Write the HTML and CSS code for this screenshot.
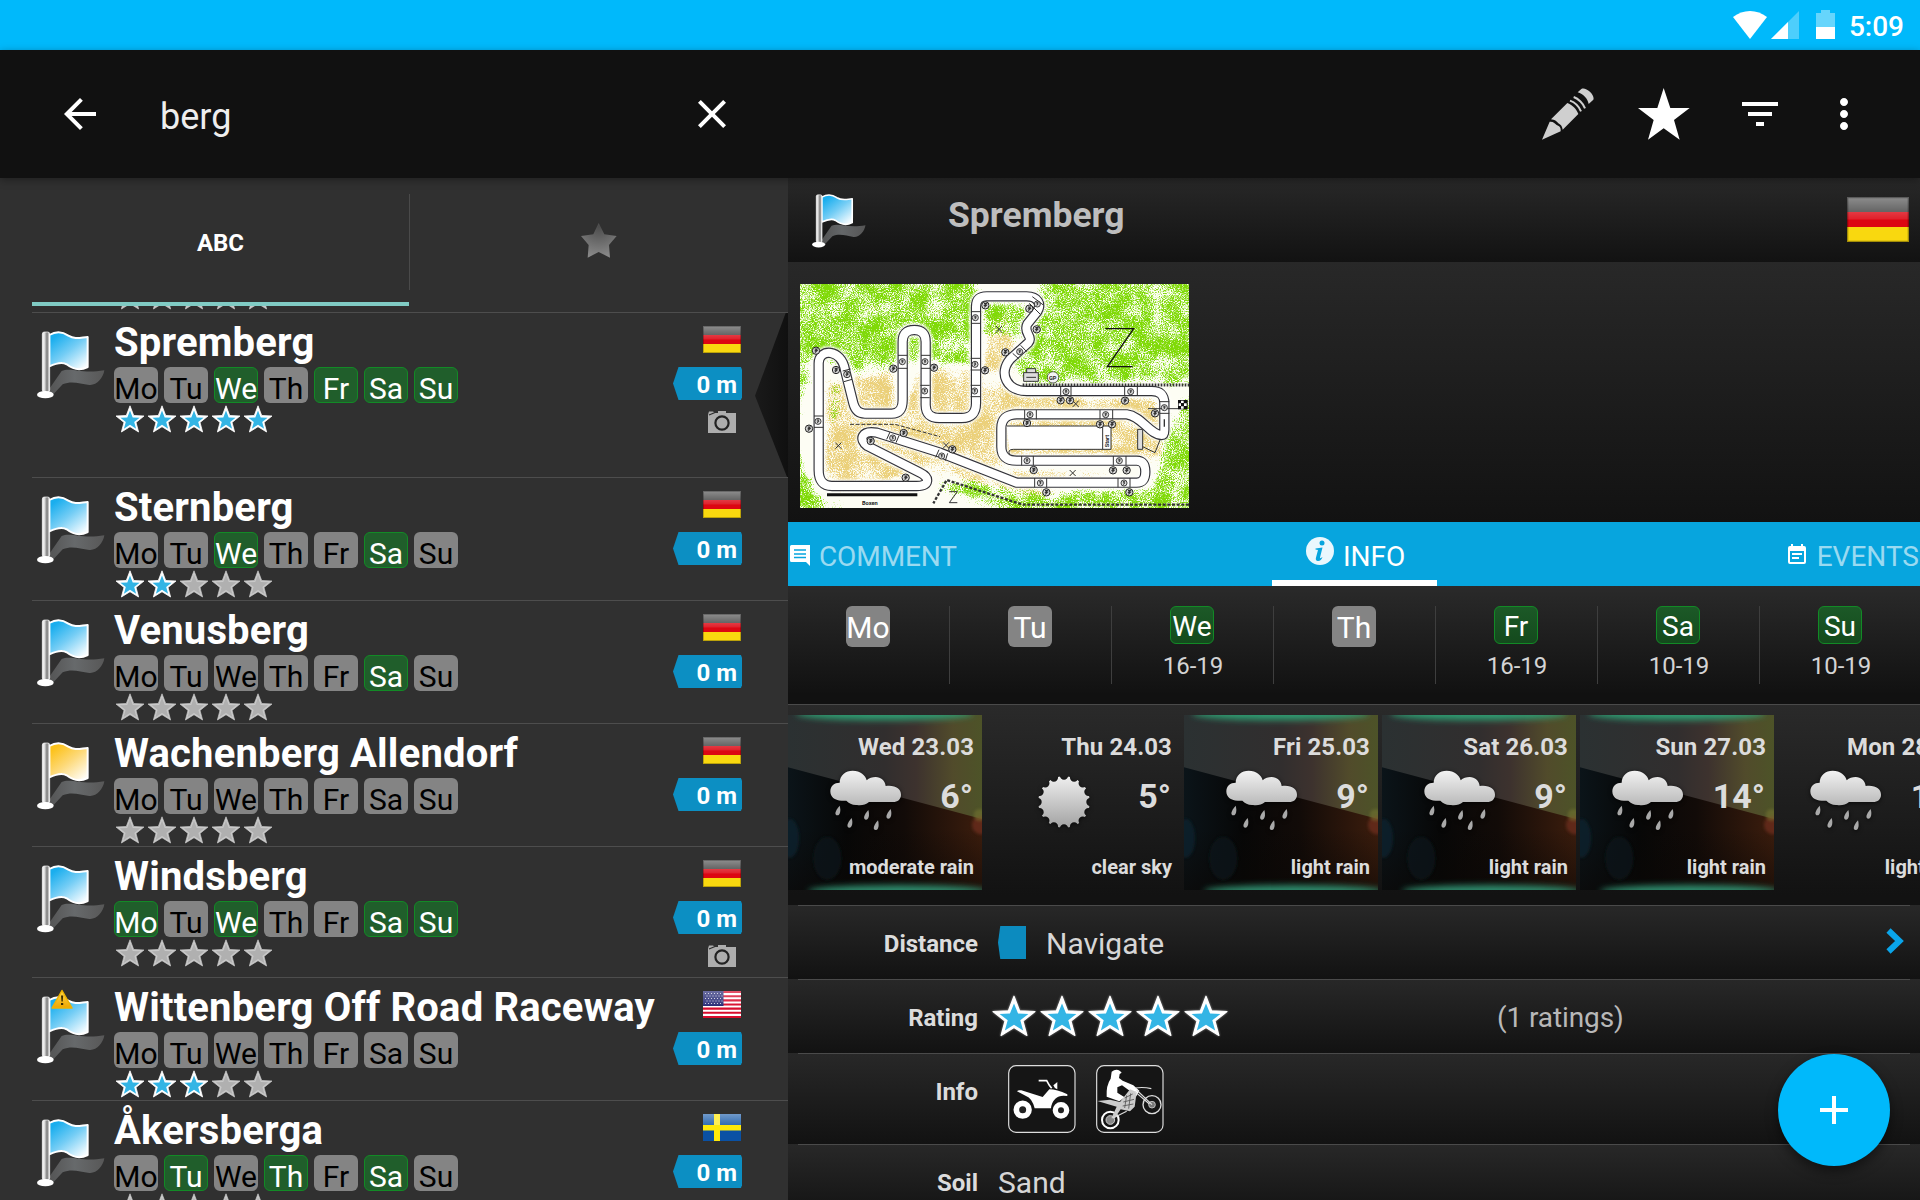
FILE: index.html
```html
<!DOCTYPE html>
<html lang="en">
<head>
<meta charset="utf-8">
<title>Tracks</title>
<link rel="stylesheet" href="styles.css">
</head>
<body>
<svg class="defs" width="0" height="0" aria-hidden="true">
  <defs>
    <linearGradient id="flag-blue" x1="0.1" y1="0" x2="0.9" y2="1"><stop offset="0.1" stop-color="#1aaeee"/><stop offset="0.5" stop-color="#74cdf5"/><stop offset="0.95" stop-color="#f2fbff"/></linearGradient>
    <linearGradient id="flag-yellow" x1="0.1" y1="0" x2="0.9" y2="1"><stop offset="0.1" stop-color="#fcc21b"/><stop offset="0.5" stop-color="#fdd978"/><stop offset="0.95" stop-color="#fffbef"/></linearGradient>
    <linearGradient id="pole"><stop offset="0" stop-color="#fff"/><stop offset="0.3" stop-color="#ddd"/><stop offset="0.65" stop-color="#777"/><stop offset="1" stop-color="#fff"/></linearGradient>
    <linearGradient id="shade" x1="0" x2="1"><stop offset="0" stop-color="#555"/><stop offset="0.5" stop-color="#6d7072"/><stop offset="1" stop-color="#5c5c5c"/></linearGradient>
    <linearGradient id="gloss" x1="0" y1="0" x2="0" y2="1"><stop offset="0" stop-color="#fff" stop-opacity="0.42"/><stop offset="1" stop-color="#fff" stop-opacity="0.1"/></linearGradient>
    <linearGradient id="silver" x1="0" y1="0" x2="0" y2="1"><stop offset="0" stop-color="#efefef"/><stop offset="1" stop-color="#a2a2a2"/></linearGradient>
    <linearGradient id="cloudfill" x1="0" y1="0" x2="0" y2="1"><stop offset="0" stop-color="#f2f2f2"/><stop offset="1" stop-color="#b9b9b9"/></linearGradient>
    <radialGradient id="tabstar" cx="0.5" cy="0.1" r="0.9"><stop offset="0" stop-color="#4c4c4c"/><stop offset="1" stop-color="#8a8a8a"/></radialGradient>
    <linearGradient id="warn" x1="0" y1="0" x2="0" y2="1"><stop offset="0" stop-color="#ffd84a"/><stop offset="1" stop-color="#eda600"/></linearGradient>
    <linearGradient id="sky"><stop offset="0" stop-color="#2b3132"/><stop offset="0.5" stop-color="#312e2e"/><stop offset="0.66" stop-color="#3d322e"/><stop offset="0.85" stop-color="#514b2b"/><stop offset="1" stop-color="#4d5328"/></linearGradient>
    <linearGradient id="ground"><stop offset="0" stop-color="#0b1419"/><stop offset="0.3" stop-color="#070707"/><stop offset="0.6" stop-color="#120b08"/><stop offset="1" stop-color="#3c1d0d"/></linearGradient>
    <linearGradient id="groundfade" x1="0" y1="0" x2="0" y2="1"><stop offset="0.5" stop-color="#0a0705" stop-opacity="0"/><stop offset="1" stop-color="#0a0705" stop-opacity="0.6"/></linearGradient>
    <filter id="soft" x="-50%" y="-100%" width="200%" height="300%"><feGaussianBlur stdDeviation="9"/></filter>
    <filter id="soft-s" x="-30%" y="-30%" width="160%" height="160%"><feGaussianBlur stdDeviation="4"/></filter>
    <filter id="speckle" x="0" y="0" width="100%" height="100%" color-interpolation-filters="sRGB">
      <feGaussianBlur in="SourceAlpha" stdDeviation="12" result="b"/>
      <feTurbulence type="fractalNoise" baseFrequency="0.3" numOctaves="2" seed="4"/>
      <feColorMatrix values="0 0 0 0 0  0 0 0 0 0  0 0 0 0 0  2 0 0 0 -0.5" result="fine"/>
      <feTurbulence type="fractalNoise" baseFrequency="0.018" numOctaves="3" seed="9"/>
      <feColorMatrix values="0 0 0 0 0  0 0 0 0 0  0 0 0 0 0  0 1.8 0 0 -0.4" result="coarse"/>
      <feComposite in="fine" in2="coarse" operator="arithmetic" k2="0.62" k3="0.38" result="n"/>
      <feComposite in="b" in2="n" operator="arithmetic" k2="0.45" k3="0.75"/>
      <feComponentTransfer result="m"><feFuncA type="linear" slope="4.5" intercept="-3"/></feComponentTransfer>
      <feMorphology in="SourceGraphic" operator="dilate" radius="14"/>
      <feComposite in2="m" operator="in"/>
    </filter>

    <symbol id="flag" viewBox="111 482 204 204">
      <path d="M185 602C212 590 245 612 313 600C310 622 290 646 268 644C240 640 215 630 188 642L158 674L135 674Z" fill="url(#shade)" opacity="0.9"/>
      <path d="M148 494C165 484 185 482 205 496C225 508 240 502 263 500V590C240 602 220 598 200 582C185 572 165 580 148 588Z" stroke="#fff" stroke-width="6" stroke-linejoin="round"/>
      <rect x="127" y="485" width="22" height="180" rx="6" fill="url(#pole)" stroke="#fff" stroke-width="2"/>
      <ellipse cx="136" cy="673" rx="25" ry="11" fill="#fff"/>
    </symbol>
    <symbol id="on" viewBox="0 0 32 28">
      <path d="M16 .8L19.7 10.5L30 11L22 17.400L24.600 27L16 21.700L7.400 27L10 17.400L2 11L12.300 10.500Z" fill="#fff" stroke="#fff" stroke-width=".8" stroke-linejoin="round"/>
      <path d="M16 5.600L18.700 12.400L25.600 12.700L20.200 16.900L22.100 23.700L16 19.800L9.900 23.700L11.800 16.900L6.400 12.700L13.300 12.400Z" fill="#33b5e5"/>
    </symbol>
    <symbol id="off" viewBox="0 0 32 28">
      <path d="M16 .8L19.700 10.500L30 11L22 17.400L24.600 27L16 21.700L7.400 27L10 17.400L2 11L12.300 10.500Z" fill="#c9c9c9" stroke="#c9c9c9" stroke-width=".7" stroke-linejoin="round"/>
      <path d="M16 4.800L18.800 12L26.300 12.300L20.400 16.900L22.500 24.300L16 20.100L9.500 24.300L11.600 16.900L5.700 12.300L13.200 12Z" fill="#b0b0b0"/>
    </symbol>
    <symbol id="rate-0" viewBox="0 0 160 28"><use href="#off" width="32" height="28"/><use href="#off" x="32" width="32" height="28"/><use href="#off" x="64" width="32" height="28"/><use href="#off" x="96" width="32" height="28"/><use href="#off" x="128" width="32" height="28"/></symbol>
    <symbol id="rate-2" viewBox="0 0 160 28"><use href="#on" width="32" height="28"/><use href="#on" x="32" width="32" height="28"/><use href="#off" x="64" width="32" height="28"/><use href="#off" x="96" width="32" height="28"/><use href="#off" x="128" width="32" height="28"/></symbol>
    <symbol id="rate-3" viewBox="0 0 160 28"><use href="#on" width="32" height="28"/><use href="#on" x="32" width="32" height="28"/><use href="#on" x="64" width="32" height="28"/><use href="#off" x="96" width="32" height="28"/><use href="#off" x="128" width="32" height="28"/></symbol>
    <symbol id="rate-5" viewBox="0 0 160 28"><use href="#on" width="32" height="28"/><use href="#on" x="32" width="32" height="28"/><use href="#on" x="64" width="32" height="28"/><use href="#on" x="96" width="32" height="28"/><use href="#on" x="128" width="32" height="28"/></symbol>
    <symbol id="de" viewBox="0 0 38 27" preserveAspectRatio="none">
      <path d="M0 0h38v9H0z" fill="#3c3c3c"/><path d="M0 9h38v9H0z" fill="#dc0612"/><path d="M0 18h38v9H0z" fill="#f9d80f"/>
      <path d="M0 0h38v13.5H0z" fill="url(#gloss)"/><path d="M.4.4h37.2v26.2H.4z" fill="none" stroke="#000" stroke-opacity=".35" stroke-width=".8"/>
    </symbol>
    <symbol id="se" viewBox="0 0 38 27">
      <path d="M0 0h38v27H0z" fill="#0a51a4"/><path d="M0 0h38v13.5H0z" fill="url(#gloss)"/><path d="M11 0h6v27h-6zM0 11h38v5.500H0z" fill="#fee90a"/><path d="M11 0h6v11h-6z" fill="#fff" opacity=".3"/>
    </symbol>
    <symbol id="us" viewBox="0 0 38 27">
      <path d="M0 0h38v27H0z" fill="#fff"/>
      <path d="M0 1.040h38M0 5.190h38M0 9.350h38M0 13.500h38M0 17.650h38M0 21.810h38M0 25.960h38" stroke="#d80d2c" stroke-width="2.080"/>
      <path d="M0 0h20.500v15H0z" fill="#2b2f78"/>
      <path d="M2 2.500h18M3.500 5h16M2 7.500h18M3.500 10h16M2 12.500h18" stroke="#fff" stroke-width="1" stroke-dasharray="1 2" opacity=".75"/>
      <path d="M0 0h38v13.500H0z" fill="url(#gloss)" opacity=".7"/>
    </symbol>
    <symbol id="camera" viewBox="0 0 30 24">
      <path d="M1 4.500L2 1.500H6L8 3H11V1H19V3H29V23H1Z" fill="#adadad"/>
      <path d="M2 5L8 2.500" stroke="#2c2c2c" stroke-width="1.300"/>
      <circle cx="15" cy="13" r="6.600" fill="#adadad" stroke="#222" stroke-width="2.200"/>
    </symbol>
    <symbol id="rain" viewBox="155 210 213 183">
      <path d="M190 302C168 302 156 290 156 274C156 258 168 248 184 248C184 226 202 212 223 212C246 212 262 226 265 241C272 234 282 231 292 231C308 231 320 242 322 258C350 254 368 266 368 284C368 298 358 306 344 306H272C262 314 250 317 236 315C222 316 212 310 204 302Z" fill="url(#cloudfill)"/>
      <g fill="#a9a9a9"><path id="drop" d="M184 317C188 330 186 346 177 346C168 345 169 334 184 317Z"/><use href="#drop" x="36" y="37"/><use href="#drop" x="86" y="13"/><use href="#drop" x="115" y="44"/><use href="#drop" x="153" y="10"/></g>
    </symbol>
    <mask id="teeth"><circle cx="26" cy="26" r="26" fill="#fff"/><circle cx="26" cy="26" r="26.500" fill="none" stroke="#000" stroke-width="8.400" stroke-linecap="round" pathLength="16" stroke-dasharray="0 1"/></mask>
    <symbol id="sun" viewBox="0 0 52 52"><circle cx="26" cy="26" r="26" fill="url(#silver)" mask="url(#teeth)"/></symbol>
    <symbol id="night" viewBox="0 0 582 525" preserveAspectRatio="none">
      <rect width="582" height="525" fill="url(#sky)"/>
      <path d="M0 157L582 312V525H0Z" fill="url(#ground)"/>
      <path d="M0 157L582 312V525H0Z" fill="url(#groundfade)"/>
      <ellipse cx="118" cy="430" rx="42" ry="64" fill="#0d181d" opacity=".7" filter="url(#soft-s)"/>
      <ellipse cx="5" cy="370" rx="28" ry="58" fill="#11232d" opacity=".8" filter="url(#soft-s)"/>
      <circle cx="580" cy="330" r="28" fill="#7a3322" opacity=".6" filter="url(#soft-s)"/>
      <circle cx="575" cy="300" r="18" fill="#7a7a30" opacity=".5" filter="url(#soft-s)"/>
      <ellipse cx="290" cy="-4" rx="265" ry="20" fill="#2f9a70" filter="url(#soft)"/>
      <ellipse cx="330" cy="528" rx="270" ry="18" fill="#2f8a6c" filter="url(#soft)"/>
    </symbol>
    <symbol id="mark" viewBox="-12 -12 24 24" overflow="visible"><circle r="11" fill="#d8d8d8" stroke="#222" stroke-width="3"/><path d="M-4-5h7l-5 5h5l-6 6" fill="none" stroke="#333" stroke-width="3.500"/></symbol>
  </defs>
</svg>

<header class="status">
  <svg width="34" height="28" viewBox="0 0 34 28"><path d="M17 28L0 6C10-2 24-2 34 6Z" fill="#fff"/></svg>
  <svg class="signal" width="28" height="28" viewBox="0 0 28 28"><path d="M0 28L28 0V28Z" fill="#fff" opacity=".3"/><path d="M0 28L17 11V28Z" fill="#fff"/></svg>
  <svg class="battery" width="19" height="29" viewBox="0 0 19 29"><path d="M0 3H5V0H14V3H19V17H0Z" fill="#fff" opacity=".4"/><path d="M0 17H19V29H0Z" fill="#fff"/></svg>
  <span class="clock">5:09</span>
</header>

<nav class="toolbar">
  <svg class="back" width="48" height="48" viewBox="0 0 24 24"><path d="M20 11H7.830l5.590-5.590L12 4l-8 8 8 8 1.410-1.410L7.830 13H20v-2z" fill="#fff"/></svg>
  <span class="query">berg</span>
  <svg class="clear" width="48" height="48" viewBox="0 0 24 24"><path d="M19 6.410L17.590 5 12 10.590 6.410 5 5 6.410 10.590 12 5 17.590 6.410 19 12 13.410 17.590 19 19 17.590 13.410 12z" fill="#fff"/></svg>
  <svg class="edit" width="52" height="52" viewBox="0 0 156 156">
    <g fill="#cfcfcf"><path d="M0 155L23 101C35 100 39 107 44 111C53 115 57 119 56 130Z"/><path d="M27 94L76 45C90 50 104 63 109 78L62 125C60 112 55 110 49 106C43 99 39 95 27 94Z"/><path d="M107 13L118 3C130-5 160 20 154 35L140 48C137 32 124 18 107 13Z"/></g>
    <g fill="none" stroke="#cfcfcf" stroke-width="6"><path d="M84 38C98 43 111 56 117 70"/><path d="M95 27C109 32 124 46 129 61"/></g>
  </svg>
  <svg class="fav" width="52" height="52" viewBox="0 0 156 156"><path d="M77 0L97 60H155L108 96L125 155L77 121L30 155L47 96L0 60H58Z" fill="#fff"/></svg>
  <svg class="filter" width="48" height="48" viewBox="0 0 24 24"><path d="M10 18h4v-2h-4v2zM3 6v2h18V6H3zm3 7h12v-2H6v2z" fill="#fff"/></svg>
  <svg class="more" width="48" height="48" viewBox="0 0 24 24"><path d="M12 8c1.100 0 2-.9 2-2s-.9-2-2-2-2 .9-2 2 .9 2 2 2zm0 2c-1.100 0-2 .9-2 2s.9 2 2 2 2-.9 2-2-.9-2-2-2zm0 6c-1.100 0-2 .9-2 2s.9 2 2 2 2-.9 2-2-.9-2-2-2z" fill="#fff"/></svg>
</nav>

<main class="panes">
  <section class="list">
    <div class="tabs">
      <div class="tab active">ABC</div>
      <div class="tab"><svg width="36" height="35" viewBox="0 0 108 105"><path d="M53 0L70 34L107 39L84 66L87 104L53 87L20 104L23 66L0 39L37 34Z" fill="url(#tabstar)"/></svg></div>
    </div>
    <div class="rows">
      <div class="peek"><svg class="stars"><use href="#rate-0"/></svg></div>

      <article class="row selected">
        <svg class="pin"><use href="#flag"/></svg>
        <div class="body"><h2>Spremberg</h2>
          <div class="days"><i>Mo</i><i>Tu</i><i class="open">We</i><i>Th</i><i class="open">Fr</i><i class="open">Sa</i><i class="open">Su</i></div>
          <svg class="stars"><use href="#rate-5"/></svg></div>
        <div class="meta"><svg class="nation"><use href="#de"/></svg><span class="dist">0 m</span><svg class="camera"><use href="#camera"/></svg></div>
      </article>

      <article class="row">
        <svg class="pin"><use href="#flag"/></svg>
        <div class="body"><h2>Sternberg</h2>
          <div class="days"><i>Mo</i><i>Tu</i><i class="open">We</i><i>Th</i><i>Fr</i><i class="open">Sa</i><i>Su</i></div>
          <svg class="stars"><use href="#rate-2"/></svg></div>
        <div class="meta"><svg class="nation"><use href="#de"/></svg><span class="dist">0 m</span></div>
      </article>

      <article class="row">
        <svg class="pin"><use href="#flag"/></svg>
        <div class="body"><h2>Venusberg</h2>
          <div class="days"><i>Mo</i><i>Tu</i><i>We</i><i>Th</i><i>Fr</i><i class="open">Sa</i><i>Su</i></div>
          <svg class="stars"><use href="#rate-0"/></svg></div>
        <div class="meta"><svg class="nation"><use href="#de"/></svg><span class="dist">0 m</span></div>
      </article>

      <article class="row">
        <svg class="pin yellow"><use href="#flag"/></svg>
        <div class="body"><h2>Wachenberg Allendorf</h2>
          <div class="days"><i>Mo</i><i>Tu</i><i>We</i><i>Th</i><i>Fr</i><i>Sa</i><i>Su</i></div>
          <svg class="stars"><use href="#rate-0"/></svg></div>
        <div class="meta"><svg class="nation"><use href="#de"/></svg><span class="dist">0 m</span></div>
      </article>

      <article class="row photo">
        <svg class="pin"><use href="#flag"/></svg>
        <div class="body"><h2>Windsberg</h2>
          <div class="days"><i class="open">Mo</i><i>Tu</i><i class="open">We</i><i>Th</i><i>Fr</i><i class="open">Sa</i><i class="open">Su</i></div>
          <svg class="stars"><use href="#rate-0"/></svg></div>
        <div class="meta"><svg class="nation"><use href="#de"/></svg><span class="dist">0 m</span><svg class="camera"><use href="#camera"/></svg></div>
      </article>

      <article class="row">
        <div class="pinwrap"><svg class="pin"><use href="#flag"/></svg>
          <svg class="warning" width="22" height="20" viewBox="0 0 22 20"><path d="M11 1.500L21 19H1Z" fill="url(#warn)" stroke="#eeb200" stroke-width="1.500" stroke-linejoin="round"/><path d="M10 6.500h2.200l-.5 6h-1.200zM10 14h2.200v2H10z" fill="#3a2c00"/></svg></div>
        <div class="body"><h2>Wittenberg Off Road Raceway</h2>
          <div class="days"><i>Mo</i><i>Tu</i><i>We</i><i>Th</i><i>Fr</i><i>Sa</i><i>Su</i></div>
          <svg class="stars"><use href="#rate-3"/></svg></div>
        <div class="meta"><svg class="nation"><use href="#us"/></svg><span class="dist">0 m</span></div>
      </article>

      <article class="row">
        <svg class="pin"><use href="#flag"/></svg>
        <div class="body"><h2>Åkersberga</h2>
          <div class="days"><i>Mo</i><i class="open">Tu</i><i>We</i><i class="open">Th</i><i>Fr</i><i class="open">Sa</i><i>Su</i></div>
          <svg class="stars"><use href="#rate-0"/></svg></div>
        <div class="meta"><svg class="nation"><use href="#se"/></svg><span class="dist">0 m</span></div>
      </article>
    </div>
  </section>

  <section class="detail">
    <div class="title">
      <svg class="title-pin"><use href="#flag"/></svg>
      <h1>Spremberg</h1>
      <svg class="title-nation"><use href="#de"/></svg>
    </div>

    <div class="gallery">
      <svg class="map" viewBox="60 342 1167 672" preserveAspectRatio="none">
        <rect x="60" y="342" width="1167" height="672" fill="#fdfdf4"/>
        <g filter="url(#speckle)">
          <rect x="40" y="320" width="1210" height="710" fill="#fff" fill-opacity="0"/>
          <path d="M130 640L350 600L360 720L420 600H600L660 600L680 660L1150 690V870H680L640 900L1100 925L700 935L460 880L420 905L250 960H130Z M610 640H700V420H620Z M860 480H920V560H860ZM250 390H310V440H250ZM420 400H520V440H420Z M440 900L760 1000L900 970L560 900Z" fill="#ebd07a"/>
        </g>
        <g filter="url(#speckle)">
          <rect x="40" y="320" width="1210" height="710" fill="#fff" fill-opacity="0"/>
          <path d="M40 320H590V590L440 575L215 610L100 560L40 780Z M780 320H1250V640H730L690 570L760 480Z M610 395H740L760 440L735 500H610Z M450 945L700 1030H1250V640L1170 760L1120 950L800 965L560 930ZM40 800L100 960L200 1030H40ZM150 640H180V760H150Z" fill="#80da08"/>
        </g>
        <defs><path id="course" d="M116 580V900Q116 948 156 948H410C450 948 450 922 420 908L262 828C235 808 245 780 290 788L480 848L710 938H1070Q1096 938 1096 905Q1096 872 1070 872H710Q664 872 664 830V775Q664 733 710 733H1040C1085 738 1110 795 1145 795Q1153 795 1153 780V700Q1153 663 1115 663H740C680 663 655 610 690 568L745 518C762 500 728 490 742 462L768 430C790 400 770 379 740 379H620Q588 379 588 410V700Q588 744 545 744H478Q437 744 437 705V515Q437 480 403 480Q368 480 368 515V690Q368 731 335 731H255Q228 731 220 700L195 600C185 535 116 535 116 580Z"/></defs>
        <use href="#course" fill="none" stroke="#fefefa" stroke-width="40" stroke-linejoin="round" filter="url(#soft-s)"/>
        <use href="#course" fill="none" stroke="#33333a" stroke-width="31" stroke-linejoin="round"/>
        <use href="#course" fill="none" stroke="#fff" stroke-width="24" stroke-linejoin="round"/>
        <g fill="none" stroke="#333" stroke-width="3">
          <path d="M680 768H993V838H700Q680 838 690 856M968 768V838" fill="#fff"/>
          <path d="M1088 830L1125 848L1140 810"/>
          <path d="M574 425H602M574 460H602M572 565H600M572 600H600M572 646H600M572 680H600M354 556H382M354 595H382M423 556H451M423 595H451M421 646H449M421 683H449M102 738H130M102 772H130M188 603L212 597M192 635L216 628M842 650V678M873 650V678M1034 650V678M1072 650V678M734 720V748M769 720V748M960 720V748M998 720V748M725 858V886M760 858V886M1000 858V886M1038 858V886M764 924V952M800 924V952M1014 924V952M1050 924V952M1140 695H1168M1140 730H1168M1104 716H1195M320 808L330 786M348 818L357 797M467 862L477 839M496 872L503 850M698 550L716 566M722 526L740 545M757 380L790 405M748 400L780 432"/>
          <path d="M210 763H345L480 800" stroke-dasharray="12 5" stroke-width="3"/>
          <path d="M648 468L666 488M666 468L648 488M878 692L896 711M896 692L878 711M166 818L184 836M184 818L166 836M489 817L507 835M507 817L489 835M869 900L887 918M887 900L869 918"/>
          <path d="M976 476H1061L982 590H1058" stroke="#111" stroke-width="4"/>
          <path d="M508 965H532L508 998H532" stroke-width="3"/>
          <path d="M728 645H1227" stroke-width="9" stroke-dasharray="5 4"/><path d="M1227 1004H728L500 930L460 1000" stroke-width="7" stroke-dasharray="9 5"/>
          <path d="M731 608H775V634H731ZM740 608V596H767V608M739 622H768M1073 778H1088V838H1073Z" fill="#ddd"/>
          <path d="M1153 748V770" stroke-width="4"/>
        </g>
        <path d="M141 974H412" stroke="#111" stroke-width="9"/>
        <path d="M1194 690H1223V718H1194Z" fill="#111"/><path d="M1203 692h8v7h-8zM1196 700h7v8h-7zM1212 700h8v8h-8zM1203 709h8v7h-8z" fill="#fff"/>
        <g>
          <use href="#mark" x="96" y="530" width="24" height="24"/><use href="#mark" x="156" y="588" width="24" height="24"/><use href="#mark" x="190" y="602" width="22" height="22"/><use href="#mark" x="328" y="584" width="24" height="24"/><use href="#mark" x="357" y="565" width="20" height="20"/><use href="#mark" x="425" y="565" width="20" height="20"/><use href="#mark" x="450" y="581" width="24" height="24"/><use href="#mark" x="424" y="653" width="20" height="20"/><use href="#mark" x="574" y="653" width="20" height="20"/><use href="#mark" x="576" y="433" width="20" height="20"/><use href="#mark" x="604" y="394" width="24" height="24"/><use href="#mark" x="575" y="573" width="20" height="20"/><use href="#mark" x="603" y="589" width="24" height="24"/><use href="#mark" x="736" y="404" width="24" height="24"/><use href="#mark" x="762" y="392" width="20" height="20"/><use href="#mark" x="758" y="466" width="24" height="24"/><use href="#mark" x="664" y="535" width="24" height="24"/><use href="#mark" x="709" y="535" width="20" height="20"/><use href="#mark" x="848" y="655" width="20" height="20"/><use href="#mark" x="1042" y="655" width="20" height="20"/><use href="#mark" x="830" y="679" width="24" height="24"/><use href="#mark" x="858" y="679" width="24" height="24"/><use href="#mark" x="1023" y="680" width="24" height="24"/><use href="#mark" x="1143" y="703" width="20" height="20"/><use href="#mark" x="1113" y="718" width="24" height="24"/><use href="#mark" x="740" y="724" width="20" height="20"/><use href="#mark" x="967" y="724" width="20" height="20"/><use href="#mark" x="729" y="747" width="24" height="24"/><use href="#mark" x="948" y="751" width="24" height="24"/><use href="#mark" x="984" y="751" width="24" height="24"/><use href="#mark" x="731" y="862" width="20" height="20"/><use href="#mark" x="749" y="888" width="24" height="24"/><use href="#mark" x="1008" y="862" width="20" height="20"/><use href="#mark" x="987" y="889" width="24" height="24"/><use href="#mark" x="1028" y="889" width="24" height="24"/><use href="#mark" x="771" y="929" width="20" height="20"/><use href="#mark" x="787" y="955" width="24" height="24"/><use href="#mark" x="1022" y="929" width="20" height="20"/><use href="#mark" x="1036" y="955" width="24" height="24"/><use href="#mark" x="104" y="744" width="20" height="20"/><use href="#mark" x="75" y="764" width="24" height="24"/><use href="#mark" x="260" y="801" width="24" height="24"/><use href="#mark" x="328" y="794" width="20" height="20"/><use href="#mark" x="359" y="777" width="24" height="24"/><use href="#mark" x="475" y="848" width="20" height="20"/><use href="#mark" x="505" y="826" width="24" height="24"/><use href="#mark" x="365" y="911" width="24" height="24"/>
        </g>
        <circle cx="819" cy="622" r="17" fill="#f4f4f4" stroke="#222" stroke-width="2"/>
        <g class="map-text"><text x="807" y="629">GP</text><text x="246" y="1004">Boxen</text><text transform="translate(986 832) rotate(-90)">Start</text></g>
      </svg>
    </div>

    <div class="pager">
      <div class="page comment"><svg width="20" height="21" viewBox="0 0 20 21"><path d="M1.500 0H20V21L16 17H1.500Q0 17 0 15.500V1.500Q0 0 1.500 0Z" fill="#fff"/><path d="M4 5H16M4 9H16M4 12.500H16" stroke="#07a5de" stroke-width="1.700"/></svg>COMMENT</div>
      <div class="page info"><svg width="28" height="28" viewBox="0 0 28 28"><circle cx="14" cy="14" r="14" fill="#eaf7fd"/><circle cx="16" cy="6" r="2.500" fill="#07a5de"/><path d="M9.500 11.500L16.500 10.500L14 20.500Q14 22 16.500 20Q15 24.500 11.500 24Q9.200 23.500 10 20.500L12 13L9.500 12.500Z" fill="#07a5de"/></svg>INFO</div>
      <div class="page events"><svg width="18" height="20" viewBox="0 0 18 20"><path d="M2 2H3V0H5V2H13V0H15V2H16Q18 2 18 4V18Q18 20 16 20H2Q0 20 0 18V4Q0 2 2 2ZM2 7V18H16V7ZM4 9H14V11H4ZM4 13H11V15H4Z" fill="#fff" fill-rule="evenodd"/></svg>EVENTS</div>
    </div>

    <div class="week">
      <div><i>Mo</i></div><div><i>Tu</i></div><div><i class="open">We</i><span>16-19</span></div><div><i>Th</i></div>
      <div><i class="open">Fr</i><span>16-19</span></div><div><i class="open">Sa</i><span>10-19</span></div><div><i class="open">Su</i><span>10-19</span></div>
    </div>

    <div class="weather">
      <div class="card"><svg class="bg"><use href="#night"/></svg><b>Wed 23.03</b><div class="now"><svg class="icon"><use href="#rain"/></svg><strong>6°</strong></div><em>moderate rain</em></div>
      <div class="card"><b>Thu 24.03</b><div class="now"><svg class="icon sun"><use href="#sun"/></svg><strong>5°</strong></div><em>clear sky</em></div>
      <div class="card"><svg class="bg"><use href="#night"/></svg><b>Fri 25.03</b><div class="now"><svg class="icon"><use href="#rain"/></svg><strong>9°</strong></div><em>light rain</em></div>
      <div class="card"><svg class="bg"><use href="#night"/></svg><b>Sat 26.03</b><div class="now"><svg class="icon"><use href="#rain"/></svg><strong>9°</strong></div><em>light rain</em></div>
      <div class="card"><svg class="bg"><use href="#night"/></svg><b>Sun 27.03</b><div class="now"><svg class="icon"><use href="#rain"/></svg><strong>14°</strong></div><em>light rain</em></div>
      <div class="card"><b>Mon 28.03</b><div class="now"><svg class="icon"><use href="#rain"/></svg><strong>12°</strong></div><em>light rain</em></div>
    </div>

    <div class="field"><label>Distance</label><span class="arrow"></span><span class="value navigate">Navigate</span>
      <svg class="chevron" width="18" height="26" viewBox="0 0 18 26"><path d="M2.500 2.500L13.500 13L2.500 23.500" fill="none" stroke="#0aa5ea" stroke-width="6"/></svg></div>
    <div class="field"><label>Rating</label>
      <svg class="bigstars"><use href="#rate-5"/></svg>
      <span class="count">(1 ratings)</span></div>
    <div class="field tall"><label>Info</label>
      <svg class="kind quad" width="68" height="68" viewBox="684 495 204 204">
        <rect x="686" y="497" width="199" height="200" rx="22" fill="#151515" stroke="#ddd" stroke-width="3.500"/>
        <path d="M711 574Q714 569 724 571L788 591L808 568Q830 568 862 583V588Q838 584 826 596Q814 608 813 625H764Q756 594 738 588Z" fill="#fff"/>
        <path d="M776 542H800L808 556L815 565" fill="none" stroke="#fff" stroke-width="5"/><path d="M832 546V568Q822 564 820 556Z" fill="#fff"/>
        <circle cx="728" cy="629" r="19" fill="#222" stroke="#fff" stroke-width="17"/><circle cx="843" cy="631" r="17" fill="#222" stroke="#fff" stroke-width="16"/>
      </svg>
      <svg class="kind" width="68" height="68" viewBox="948 495 204 204">
        <rect x="950" y="497" width="199" height="200" rx="22" fill="#151515" stroke="#ddd" stroke-width="3.500"/>
        <circle cx="991" cy="660" r="25" fill="none" stroke="#fff" stroke-width="6"/><circle cx="991" cy="660" r="13" fill="#888" stroke="#ccc" stroke-width="3"/>
        <circle cx="1116" cy="614" r="27" fill="none" stroke="#ddd" stroke-width="4"/><circle cx="1116" cy="614" r="10" fill="#777" stroke="#bbb" stroke-width="3"/>
        <path d="M995 515Q1008 505 1020 513L1025 518L1019 522L1017 534L1028 542L1060 556L1078 572L1068 590L1050 573L1026 556L1012 562L1012 578L1034 592L1018 604L980 590Q978 556 992 536Z" fill="#fff"/>
        <path d="M952 603L990 599L1020 606L1050 568L1070 576L1064 620L1050 634L1022 628L1006 652L994 655L1010 620Z" fill="#ccc"/>
        <path d="M1066 564Q1090 560 1114 566M1070 570L1116 614M1064 574L1108 612M998 655L1040 634" fill="none" stroke="#ddd" stroke-width="3.500"/>
        <path d="M1034 594L1058 582M1030 606L1062 598M1028 618L1060 612M1040 586L1034 624M1052 580L1046 626" stroke="#555" stroke-width="2.500"/>
      </svg></div>
    <div class="field last"><label>Soil</label><span class="value">Sand</span></div>
  </section>
</main>
<button class="fab" aria-label="Add"><svg width="28" height="28" viewBox="0 0 28 28"><path d="M12 0H16V12H28V16H16V28H12V16H0V12H12Z" fill="#fff"/></svg></button>
</body>
</html>
```

FILE: styles.css
```css
* { box-sizing: border-box; }
html, body { margin: 0; height: 1200px; overflow: hidden; background: #303030; }
body { display: flex; flex-direction: column; width: 1920px; position: relative; font-family: Roboto, "Liberation Sans", sans-serif; color: #fff; }
svg { display: block; flex: none; }
.defs { position: absolute; }
h1, h2 { margin: 0; }
i, em { font-style: normal; }

.status { flex: none; height: 50px; background: #00b9fb; display: flex; justify-content: flex-end; align-items: flex-start; padding: 11px 16px 0 0; }
.signal { margin-left: 4px; }
.battery { margin: -1px 0 0 17px; }
.clock { width: 69px; text-align: right; font-size: 28px; font-weight: 500; line-height: 32px; }

.toolbar { flex: none; height: 128px; background: #111; display: flex; align-items: center; padding: 0 52px 0 56px; position: relative; z-index: 2; box-shadow: 0 2px 8px rgba(0,0,0,.35); }
.query { margin-left: 56px; width: 528px; font-size: 36px; line-height: 40px; color: #eee; padding-top: 5px; }
.edit { margin-left: auto; }
.fav { margin-left: 44px; }
.filter { margin-left: 46px; }
.more { margin-left: 36px; }

.panes { flex: 1; display: flex; min-height: 0; }
.list { width: 788px; padding-left: 32px; display: flex; flex-direction: column; background: #303030; overflow: hidden; }
.tabs { flex: none; height: 128px; display: flex; }
.tab { width: 377px; display: flex; align-items: center; justify-content: center; font-size: 24px; font-weight: 700; }
.tab.active { border-bottom: 4px solid #80cbc4; padding-top: 5px; }
.tab + .tab { width: 379px; background: linear-gradient(#4a4a4a, #4a4a4a) 0 16px / 1px 96px no-repeat; padding-bottom: 3px; }

.rows { flex: 1; overflow: hidden; }
.peek { height: 6px; overflow: hidden; display: flex; align-items: flex-end; padding: 0 0 3px 82px; }
.row { height: 123px; border-top: 1px solid #4d4d4d; display: flex; align-items: flex-start; padding-left: 5px; }
.row.selected { height: 165px; }
.row.selected::after { content: ""; width: 33px; height: 164px; background: linear-gradient(90deg, #1a1a1a, #101010); clip-path: polygon(0 50.500%, 93% 0, 100% 0, 100% 100%, 97% 100%); }
.row.photo { height: 131px; }
.pin { width: 68px; height: 68px; margin-top: 18px; fill: url(#flag-blue); }
.pin.yellow { fill: url(#flag-yellow); }
.pinwrap { position: relative; }
.warning { position: absolute; left: 14px; top: 11px; }
.body { margin-left: 9px; width: 559px; padding-top: 7px; }
h2 { font-size: 40px; line-height: 46px; font-weight: 700; white-space: nowrap; letter-spacing: .17px; }
.days { display: flex; gap: 6px; margin-top: 1px; }
.days i { width: 44px; height: 36px; border-radius: 6px; background: #848484; color: #000; font-size: 30px; line-height: 35px; padding-top: 4px; display: flex; justify-content: center; border: 0 solid #128a26; }
.days i.open { background: #205e2b; color: #fff; border-width: 1px; padding-top: 3px; }
.stars { width: 160px; height: 28px; margin-top: 2px; }
.peek .stars { margin: 0 0 -1px; }
.meta { width: 69px; padding-top: 13px; display: flex; flex-direction: column; align-items: flex-end; margin-right: 13px; }
.nation { width: 38px; height: 27px; margin-right: 1px; }
.dist { width: 69px; height: 33px; margin-top: 14px; padding-right: 5px; text-align: right; background: #0c8fc3; clip-path: polygon(0 50%, 8% 0, 98.500% 0, 100% 8%, 100% 92%, 98.500% 100%, 8% 100%); font-size: 24px; font-weight: 700; line-height: 36px; }
.camera { width: 30px; height: 24px; margin: 10px 5px 0 0; }

.detail { width: 1132px; background: #121212; overflow: hidden; display: flex; flex-direction: column; }
.detail > div { flex: none; }
.title { height: 84px; background: linear-gradient(#282828, #121212); display: flex; align-items: flex-start; }
.title-pin { width: 54px; height: 54px; margin: 16px 0 0 24px; fill: url(#flag-blue); }
h1 { margin: 16px 0 0 82px; width: 899px; font-size: 35.500px; line-height: 42px; font-weight: 700; color: #bebebe; }
.title-nation { width: 62px; height: 45px; margin-top: 19px; }
.gallery { height: 260px; background: linear-gradient(#282828, #121212); padding: 22px 12px; }
.map { width: 389px; height: 224px; }
.map-text { font: 700 17px Roboto, sans-serif; fill: #222; }

.pager { height: 64px; background: #07a5de; display: grid; grid-template-columns: 484px 165px 1fr; }
.page { display: flex; align-items: flex-start; font-size: 28px; line-height: 32px; padding-top: 19px; color: rgba(255,255,255,.6); white-space: nowrap; }
.comment { letter-spacing: -.1px; }
.comment svg { margin: 4px 9px 0 2px; }
.info { color: #fff; border-bottom: 6px solid #fff; justify-content: flex-start; padding-left: 34px; }
.info svg { margin: -4px 9px 0 0; }
.events { justify-content: flex-end; padding-right: 1px; }
.events svg { margin: 3px 11px 0 0; }

.week { height: 118px; background: linear-gradient(#2a2a2a, #111 92%); display: flex; }
.week div { flex: none; width: 162px; display: flex; flex-direction: column; align-items: center; padding-top: 20px; background: linear-gradient(#3e3e3e, #3e3e3e) right 20px / 1px 78px no-repeat; }
.week div:last-child { background: none; }
.week i { width: 44px; height: 41px; border-radius: 6px; background: #848484; font-size: 30px; line-height: 35px; padding-top: 4px; margin-right: 2px; display: flex; justify-content: center; }
.week i.open { height: 38px; background: linear-gradient(#1c5927, #144a1d); border: 1px solid #128a26; font-size: 28px; line-height: 34px; padding-top: 3px; }
.week span { font-size: 24px; line-height: 28px; margin-top: 8px; color: #d4d4d4; }

.weather { height: 201px; display: flex; gap: 4px; padding-top: 10px; position: relative; border-top: 1px solid #4a4a4a; background: linear-gradient(#2a2a2a, #121212 95%); overflow: hidden; }
.card { flex: none; width: 194px; height: 175px; position: relative; display: flex; flex-direction: column; align-items: stretch; text-align: right; padding: 18px 8px 0 0; color: #dcdcdc; }
.bg { position: absolute; inset: 0; width: 194px; height: 175px; }
.card b, .card em, .now { position: relative; }
.card b { font-size: 24px; line-height: 28px; letter-spacing: .1px; }
.now { display: flex; height: 60px; margin-top: 10px; padding-left: 3px; }
.icon { width: 71px; height: 61px; margin: -1px auto 0; filter: drop-shadow(0 1px 2px rgba(0,0,0,.7)); }
.icon.sun { width: 52px; height: 52px; margin-top: 5px; }
.now strong { font-size: 34px; line-height: 40px; padding: 5px 1px 0 0; }
.card em { font-size: 20px; font-weight: 700; line-height: 24px; margin-top: 24px; }

.field { height: 74px; display: flex; align-items: flex-start; background: linear-gradient(90deg, transparent 10px, #4a4a4a 10px, #4a4a4a 1122px, transparent 1122px) top / 100% 1px no-repeat, linear-gradient(#282828, #121212); }
.field label { width: 190px; text-align: right; font-size: 24px; font-weight: 700; line-height: 28px; margin-top: 25px; color: #dcdcdc; }
.field.tall { height: 91px; }
.field.last { height: 74px; }
.arrow { width: 28px; height: 33px; margin: 21px 0 0 20px; background: #0c8bbf; clip-path: polygon(0 50%, 8% 0, 100% 0, 100% 100%, 8% 100%); }
.value { font-size: 30px; line-height: 36px; margin: 21px 0 0 20px; color: #d6d6d6; }
.chevron { margin: 23px 16px 0 auto; }
.bigstars { width: 240px; height: 42px; margin: 16px 0 0 12px; filter: drop-shadow(0 0 1px rgba(255,255,255,.5)); }
.count { margin: 23px 0 0 267px; font-size: 28px; line-height: 32px; color: #b8b8b8; letter-spacing: -.1px; }
.kind { margin: 12px 0 0 20px; }
.kind.quad { margin-left: 30px; }

.fab { position: absolute; left: 1778px; top: 1054px; width: 112px; height: 112px; border: 0; padding: 0; border-radius: 50%; background: #00b9fb; display: flex; align-items: center; justify-content: center; box-shadow: 0 5px 12px rgba(0,0,0,.5); }
```
